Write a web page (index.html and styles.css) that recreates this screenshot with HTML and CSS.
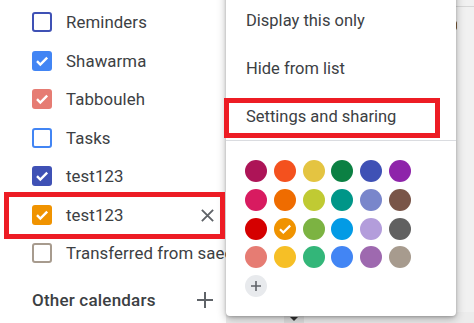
FILE: index.html
```html
<!DOCTYPE html>
<html>
<head>
<meta charset="utf-8">
<link rel="stylesheet" href="styles.css">
</head>
<body>
<div class="page">
  <div class="bg-right"><div class="bg-line"></div><div class="bg-glyph"></div></div>
  <div class="bg-bottom"><div class="bg-tri"></div></div>

  <ul class="cal-list">
    <li class="row"><span class="cb outline" style="--c:#3f51b5"></span><span class="label">Reminders</span></li>
    <li class="row"><span class="cb filled" style="--c:#4285f4"><svg viewBox="0 0 20 20"><path d="M5 10.2l3.3 3.3L15.2 6.6"/></svg></span><span class="label">Shawarma</span></li>
    <li class="row"><span class="cb filled" style="--c:#e67c73"><svg viewBox="0 0 20 20"><path d="M5 10.2l3.3 3.3L15.2 6.6"/></svg></span><span class="label">Tabbouleh</span></li>
    <li class="row"><span class="cb outline" style="--c:#4285f4"></span><span class="label">Tasks</span></li>
    <li class="row"><span class="cb filled" style="--c:#3f51b5"><svg viewBox="0 0 20 20"><path d="M5 10.2l3.3 3.3L15.2 6.6"/></svg></span><span class="label">test123</span></li>
    <li class="row"><span class="cb filled" style="--c:#f09300"><svg viewBox="0 0 20 20"><path d="M5 10.2l3.3 3.3L15.2 6.6"/></svg></span><span class="label">test123</span>
      <svg class="close" viewBox="0 0 16 16"><path d="M2 2L14 14M14 2L2 14"/></svg></li>
    <li class="row"><span class="cb outline" style="--c:#a79b8e"></span><span class="label">Transferred from saeed</span></li>
  </ul>
  <div class="other">
    <span class="other-title">Other calendars</span>
    <svg class="plus" viewBox="0 0 16 16"><path d="M8 0V16M0 8H16"/></svg>
  </div>

  <div class="menu">
    <div class="item">Display this only</div>
    <div class="item">Hide from list</div>
    <div class="item">Settings and sharing</div>
    <div class="divider"></div>
    <div class="palette">
      <span class="dot" style="background:#ad1457"></span>
      <span class="dot" style="background:#f4511e"></span>
      <span class="dot" style="background:#e4c441"></span>
      <span class="dot" style="background:#0b8043"></span>
      <span class="dot" style="background:#3f51b5"></span>
      <span class="dot" style="background:#8e24aa"></span>
      <span class="dot" style="background:#d81b60"></span>
      <span class="dot" style="background:#ef6c00"></span>
      <span class="dot" style="background:#c0ca33"></span>
      <span class="dot" style="background:#009688"></span>
      <span class="dot" style="background:#7986cb"></span>
      <span class="dot" style="background:#795548"></span>
      <span class="dot" style="background:#d50000"></span>
      <span class="dot sel" style="background:#f09300"><svg viewBox="0 0 22 22"><path d="M6 11.3l3.3 3.2L16.2 7.6"/></svg></span>
      <span class="dot" style="background:#7cb342"></span>
      <span class="dot" style="background:#039be5"></span>
      <span class="dot" style="background:#b39ddb"></span>
      <span class="dot" style="background:#616161"></span>
      <span class="dot" style="background:#e67c73"></span>
      <span class="dot" style="background:#f6bf26"></span>
      <span class="dot" style="background:#33b679"></span>
      <span class="dot" style="background:#4285f4"></span>
      <span class="dot" style="background:#9e69af"></span>
      <span class="dot" style="background:#a79b8e"></span>
      <span class="dot add"><svg viewBox="0 0 22 22"><path d="M11 6V16M6 11H16"/></svg></span>
    </div>
  </div>

  <div class="hl hl-settings"></div>
  <div class="hl hl-row"></div>
</div>
</body>
</html>
```
FILE: styles.css
```css
html, body {
  margin: 0;
  padding: 0;
  background: #fff;
}
.page {
  position: relative;
  width: 474px;
  height: 323px;
  overflow: hidden;
  font-family: Roboto, "Liberation Sans", Arial, sans-serif;
  color: #3c4043;
}
.bg-right {
  position: absolute;
  left: 440px;
  top: 0;
  width: 34px;
  height: 323px;
  background: #f1f1f1;
}
.bg-line {
  position: absolute;
  left: 0;
  right: 0;
  top: 6px;
  height: 1px;
  background: #d6d6d6;
}
.bg-glyph {
  position: absolute;
  left: 14px;
  top: 21px;
  width: 3px;
  height: 9px;
  background: #7a5a3a;
  border-radius: 0 2px 2px 0;
}
.bg-bottom {
  position: absolute;
  left: 226px;
  top: 312px;
  width: 248px;
  height: 11px;
  background: #ececec;
}
.bg-tri {
  position: absolute;
  left: 58px;
  top: 0;
  width: 20px;
  height: 11px;
  background: #dedede;
}
.bg-tri::after {
  content: "";
  position: absolute;
  left: 6px;
  top: 5px;
  border-left: 4px solid transparent;
  border-right: 4px solid transparent;
  border-top: 4px solid #333;
}
.cal-list {
  list-style: none;
  margin: 0;
  padding: 3px 0 0 32px;
}
.row {
  display: flex;
  align-items: center;
  height: 38.5px;
  position: relative;
}
.cb {
  width: 20px;
  height: 20px;
  box-sizing: border-box;
  border-radius: 3px;
  flex: none;
  display: flex;
  align-items: center;
  justify-content: center;
}
.cb.outline {
  border: 2px solid var(--c);
}
.cb.filled {
  background: var(--c);
}
.cb svg {
  width: 20px;
  height: 20px;
  fill: none;
  stroke: #fff;
  stroke-width: 2.4;
}
.label {
  margin-left: 14px;
  font-size: 16.8px;
  white-space: nowrap;
  letter-spacing: 0.1px;
}
.close {
  position: absolute;
  left: 168px;
  top: 12px;
  width: 15px;
  height: 15px;
  fill: none;
  stroke: #5f6368;
  stroke-width: 2;
}
.other {
  display: flex;
  align-items: center;
  height: 24px;
  margin-top: 15px;
  padding-left: 32px;
}
.other-title {
  font-size: 17px;
  font-weight: 500;
  letter-spacing: 0.2px;
}
.plus {
  margin-left: 41px;
  width: 16px;
  height: 16px;
  fill: none;
  stroke: #5f6368;
  stroke-width: 2;
}
.menu {
  position: absolute;
  left: 226px;
  top: -12px;
  width: 230px;
  height: 328px;
  box-sizing: border-box;
  padding-top: 8px;
  background: #fff;
  box-shadow: 0 3px 10px rgba(0,0,0,0.28), 0 1px 3px rgba(0,0,0,0.2);
  border-radius: 0 0 4px 4px;
}
.item {
  height: 48px;
  display: flex;
  align-items: center;
  padding-left: 20px;
  font-size: 16.5px;
  white-space: nowrap;
}
.divider {
  height: 1px;
  background: #dadce0;
}
.palette {
  display: grid;
  grid-template-columns: repeat(6, 22px);
  grid-auto-rows: 22px;
  column-gap: 6.8px;
  row-gap: 6.8px;
  padding: 19px 0 0 19px;
}
.dot {
  width: 22px;
  height: 22px;
  border-radius: 50%;
  display: flex;
  align-items: center;
  justify-content: center;
}
.dot svg {
  width: 22px;
  height: 22px;
  fill: none;
  stroke: #fff;
  stroke-width: 2.2;
}
.dot.add {
  background: #e8eaed;
}
.dot.add svg {
  stroke: #5f6368;
  stroke-width: 1.6;
}
.hl {
  position: absolute;
  border: 5px solid #ed1c24;
  box-sizing: border-box;
}
.hl-settings {
  left: 224px;
  top: 98px;
  width: 216px;
  height: 40px;
}
.hl-row {
  left: 4px;
  top: 192px;
  width: 221px;
  height: 47px;
}
```
